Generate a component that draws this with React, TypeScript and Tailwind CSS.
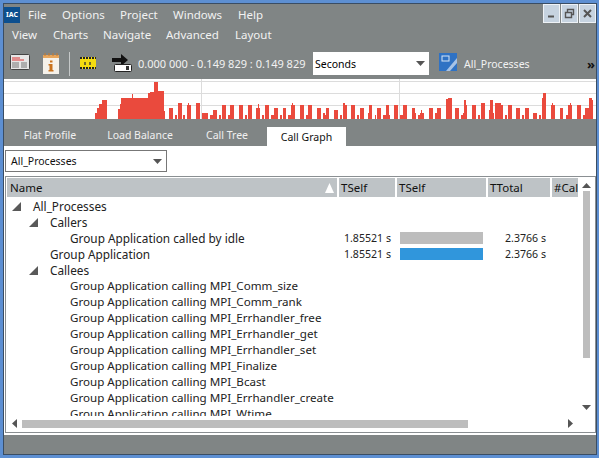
const bars: [number, number, number][] = [
[95,2,6],[97,2,11],[99,3,15],[102,5,19],[118,2,10],[120,1,15],[121,27,21],[132,1,25],[148,2,26],[150,4,27],[154,4,37],[158,2,28],[160,4,28],[164,1,8],
[169,4,11],[175,2,4],[178,4,16],[183,2,4],[187,4,14],[188,1,16],[196,4,16],[202,6,6],[210,3,4],[213,4,9],[219,2,4],[222,4,14],[228,2,4],[230,4,14],[239,4,14],[245,2,4],[248,4,14],[256,4,11],[258,1,15],[262,2,4],[265,4,14],[271,3,4],[274,4,11],[280,2,4],[283,3,11],[288,3,4],[291,4,14],[292,1,16],
[300,4,14],[306,2,4],[308,4,14],[317,4,11],[323,2,6],[325,1,4],[326,3,11],[334,4,9],[340,2,4],[343,2,16],[345,2,14],[351,4,14],[357,2,4],[360,4,11],[368,2,6],[369,3,14],[375,1,4],[377,4,11],[383,3,4],[386,3,14],[389,1,4],[394,4,14],[400,3,4],[403,4,14],[412,3,11],[415,1,6],[418,2,4],[420,2,6],[421,1,9],[422,2,6],[429,4,11],[435,2,6],[437,4,11],[446,2,20],[448,4,21],[455,4,11],[461,2,4],[463,1,6],[464,2,19],[466,1,14],[472,4,14],[478,2,4],[481,4,16],[489,1,9],[490,3,19],[493,1,6],[495,6,16],[501,2,14],[505,2,4],[508,4,14],[516,4,11],[522,2,4],[525,4,11],[533,4,6],[539,2,4],[542,1,21],[543,3,26],[551,4,14],[552,1,16],[560,3,11],[566,2,4],[568,4,14],[570,1,16],[577,4,14],[583,3,4],[585,4,11],[589,3,21],[592,1,19],
];

const callees = [
  "MPI_Comm_size","MPI_Comm_rank","MPI_Errhandler_free","MPI_Errhandler_get","MPI_Errhandler_set","MPI_Finalize","MPI_Bcast","MPI_Errhandler_create","MPI_Wtime",
];

function Tri({ dir = "down", className = "" }: { dir?: string; className?: string }) {
  const pts: Record<string, string> = { down: "0,0 9,0 4.5,5", up: "0,5 9,5 4.5,0", left: "5,0 5,9 0,4.5", right: "0,0 0,9 5,4.5" };
  const v = dir === "down" || dir === "up";
  return (
    <svg width={v ? 9 : 5} height={v ? 5 : 9} className={className}>
      <polygon points={pts[dir]} fill="#555" />
    </svg>
  );
}

function Expand() {
  return (
    <svg width="9" height="9" className="shrink-0">
      <polygon points="9,0 9,9 0,9" fill="#595959" />
    </svg>
  );
}

function Row({ indent, exp, big, children, children2 }: { indent: number; exp?: boolean; big?: boolean; children: string; children2?: React.ReactNode }) {
  return (
    <div className="flex h-4 items-center shrink-0">
      <div className={`w-[331px] flex items-center whitespace-nowrap ${big ? "text-[11.8px]" : "text-[11.6px]"}`} style={{ paddingLeft: indent }}>
        {exp && <span className="-ml-[21px] mr-3 flex"><Expand /></span>}
        <span>{children}</span>
      </div>
      {children2}
    </div>
  );
}

function Vals({ color }: { color: string }) {
  return (
    <>
      <div className="w-[53px] text-right text-[10.6px]">1.85521 s</div>
      <div className="w-[92px] pl-[9px]"><div className={`w-[83px] h-3 ${color}`} /></div>
      <div className="w-[63px] text-right text-[10.6px]">2.3766 s</div>
    </>
  );
}

function WinBtn({ children }: { children: React.ReactNode }) {
  return (
    <div className="w-[17px] h-[19px] bg-[#c6d3e0] border border-[#eef2f6] flex items-center justify-center">
      <svg width="11" height="11" fill="none" stroke="#555" strokeWidth="1.4">{children}</svg>
    </div>
  );
}

export default function App() {
  return (
    <div className="w-[599px] h-[458px] bg-[#5d8fd2] pt-[3px] pl-[3px] pr-[2px] pb-[3px] overflow-hidden text-[11px] leading-4 text-[#1c1c28]" style={{ fontFamily: '"Noto Sans", sans-serif' }}>
      <div className="w-[594px] h-[452px] border border-[#3a4d63] bg-[#808585] flex flex-col">
        {/* menu 1 */}
        <div className="h-[21px] flex items-center text-[#f2f2f2] shrink-0">
          <div className="w-4 h-4 bg-[#0c4f8f] flex items-center justify-center text-white text-[7px] font-bold leading-none">IAC</div>
          <div className="flex ml-[8px] text-[11.5px]">
            <span className="w-[34px]">File</span>
            <span className="w-[58px]">Options</span>
            <span className="w-[53px]">Project</span>
            <span className="w-[65px]">Windows</span>
            <span>Help</span>
          </div>
          <div className="ml-auto self-start flex gap-px">
            <WinBtn><path d="M2 8.5h6" strokeWidth="2" /></WinBtn>
            <WinBtn><path d="M1.5 4.5h6v5h-6zM3.5 4.5v-3h6v5h-2" /></WinBtn>
            <WinBtn><path d="M2 2l7 7M9 2l-7 7" strokeWidth="2" /></WinBtn>
          </div>
        </div>
        {/* menu 2 */}
        <div className="h-[20px] flex items-center pl-2 text-[#f2f2f2] text-[11.5px] shrink-0">
          <span className="w-[41px]">View</span>
          <span className="w-[50px]">Charts</span>
          <span className="w-[63px]">Navigate</span>
          <span className="w-[69px]">Advanced</span>
          <span>Layout</span>
        </div>
        {/* toolbar */}
        <div className="h-[34px] pt-[3px] flex items-center shrink-0 text-[#f2f2f2]">
          <svg width="20" height="16" className="ml-[6px] mb-[3px] shrink-0">
            <rect x="0.5" y="0.5" width="19" height="15" rx="1" fill="#e6e6e6" stroke="#444" />
            <path d="M2 4h8M2 6h12" stroke="#d33" strokeWidth="1" />
            <path d="M2 9h7M11 9h6M2 11h7M11 11h6M2 13h7M11 13h6" stroke="#777" strokeWidth="1" />
          </svg>
          <svg width="16" height="21" className="ml-[13px] mb-[1px] shrink-0">
            <rect x="0" y="2" width="16" height="19" fill="#f6f2ea" />
            <path d="M0 2h16v3H0z" fill="#e8a75e" />
            <path d="M2 0v3M6 0v3M10 0v3M14 0v3" stroke="#c77b2c" />
            <path d="M7 7.5h2.5v2H7zM6.5 11h3v6h1v1.5h-5V17h1v-4.5h-1V11z" fill="#c9721c" />
          </svg>
          <div className="w-px h-[24px] bg-[#c5c8c8] ml-[10px] shrink-0" />
          <svg width="16" height="12" className="ml-[10px] mb-[2px] shrink-0">
            <rect x="0" y="0" width="16" height="12" fill="#f5dc10" />
            <path d="M0 1h16M0 11h16" stroke="#222" strokeWidth="2" strokeDasharray="2 1" />
            <path d="M5 5v3M10 5v3" stroke="#443" strokeWidth="1.5" />
          </svg>
          <svg width="20" height="18" className="ml-[16px] mb-[2px] shrink-0">
            <path d="M0 4h9V0l7 6-7 6V8H0z" fill="#111" />
            <rect x="2.5" y="10.5" width="17" height="7" rx="1" fill="#fff" stroke="#222" />
            <rect x="14" y="12" width="3" height="4" fill="#333" />
          </svg>
          <span className="ml-[6px] whitespace-nowrap w-[175px]">0.000 000 - 0.149 829 : 0.149 829</span>
          <div className="w-[116px] h-[23px] bg-white flex items-center justify-between pl-[2px] pr-[4px] text-black text-[10.5px] shrink-0">
            <span>Seconds</span><Tri />
          </div>
          <svg width="18" height="18" className="ml-[10px] mb-[3px] shrink-0">
            <rect width="18" height="18" fill="#2f72c4" />
            <path d="M7 18L18 5v5l-7 8z" fill="#a7c3e6" />
            <rect x="3" y="3" width="7" height="5" fill="#2f72c4" stroke="#d7e5f5" />
          </svg>
          <span className="ml-[7px] text-[10.5px]">All_Processes</span>
          <span className="ml-auto mr-[1px] text-[#111] font-bold text-[13px]">»</span>
        </div>
        {/* chart */}
        <div className="h-[40px] shrink-0 bg-white">
          <svg width="592" height="40" className="block">
            <path d="M0 2.5h592M0 14.5h592M0 26.5h592M197.5 0v40M395.5 0v40" stroke="#dcdcdc" />
            {bars.map(([x, w, h], i) => (
              <rect key={i} x={x - 4} y={40 - h} width={w} height={h} fill="#ea4a3d" />
            ))}
          </svg>
        </div>
        {/* tabs */}
        <div className="h-[27px] flex items-end pl-[6px] text-[#f0f0f0] text-[10.5px] shrink-0">
          <div className="w-[80px] h-[19px] mb-[2px] flex items-center justify-center">Flat Profile</div>
          <div className="w-[80px] h-[19px] mb-[2px] ml-[10px] flex items-center justify-center">Load Balance</div>
          <div className="w-[80px] h-[19px] mb-[2px] ml-[7px] flex items-center justify-center">Call Tree</div>
          <div className="w-[79px] h-[19px] bg-white text-[#111] flex items-center justify-center">Call Graph</div>
        </div>
        {/* body */}
        <div className="flex-1 bg-white flex flex-col min-h-0">
          <div className="h-[30px] shrink-0 pl-px pt-1">
            <div className="w-[162px] h-[22px] border border-[#777] flex items-center justify-between pl-[5px] pr-[4px] text-[#111] text-[10.5px]">
              <span>All_Processes</span><Tri />
            </div>
          </div>
          <div className="h-[257px] shrink-0 ml-px border border-[#8a8f92] flex flex-col p-px">
            <div className="flex-1 flex min-h-0">
              <div className="w-[571px] flex flex-col min-h-0 overflow-hidden">
                <div className="h-[19px] shrink-0 flex gap-[2px] text-[#111] text-[11.5px]">
                  <div className="w-[330px] bg-[#bec3c6] flex items-center justify-between pl-[3px] pr-[3px]">
                    <span>Name</span>
                    <svg width="9" height="10"><polygon points="0,10 9,10 4.5,0" fill="#fff" /></svg>
                  </div>
                  <div className="w-[56px] bg-[#bec3c6] flex items-center pl-[2px]">TSelf</div>
                  <div className="w-[89px] bg-[#bec3c6] flex items-center pl-[2px]">TSelf</div>
                  <div className="w-[62px] bg-[#bec3c6] flex items-center pl-[2px]">TTotal</div>
                  <div className="w-[26px] bg-[#bec3c6] flex items-center pl-[2px] overflow-hidden whitespace-nowrap">#Cal</div>
                </div>
                <div className="flex-1 pt-[1px] flex flex-col overflow-hidden min-h-0 text-[#222]">
                  <Row indent={26} exp big>All_Processes</Row>
                  <Row indent={43} exp big>Callers</Row>
                  <Row indent={63} big children2={<Vals color="bg-[#bdbdbd]" />}>Group Application called by idle</Row>
                  <Row indent={43} big children2={<Vals color="bg-[#3096dc]" />}>Group Application</Row>
                  <Row indent={43} exp big>Callees</Row>
                  {callees.map((c) => (
                    <Row key={c} indent={63}>{`Group Application calling ${c}`}</Row>
                  ))}
                </div>
              </div>
              <div className="w-[16px] flex flex-col items-center shrink-0 pt-[5px] pb-[6px]">
                <Tri dir="up" />
                <div className="w-[7px] h-[167px] bg-[#bdbdbd] mt-[3px]" />
                <Tri dir="down" className="mt-auto" />
              </div>
            </div>
            <div className="h-[15px] shrink-0 flex items-center pl-[5px]">
              <Tri dir="left" />
              <div className="w-[446px] h-2 bg-[#bdbdbd] ml-[5px]" />
              <Tri dir="right" className="ml-[100px]" />
            </div>
          </div>
          <div className="flex-1 bg-[#808585] mt-[2px]" />
        </div>
      </div>
    </div>
  );
}
